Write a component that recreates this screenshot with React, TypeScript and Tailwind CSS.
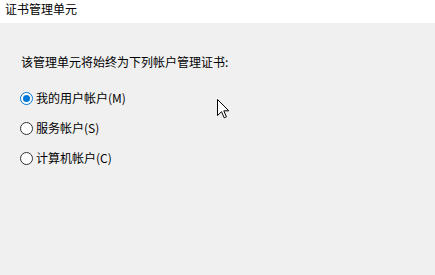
import React from "react";

const font = { fontFamily: '"Noto Sans CJK SC", "Microsoft YaHei", sans-serif' };

function Radio({ checked, label }: { checked?: boolean; label: string }) {
  return (
    <div className="flex h-[30px] items-center">
      <div
        className={
          "flex h-[13px] w-[13px] items-center justify-center rounded-full border bg-white " +
          (checked ? "border-[#0078d7]" : "border-[#333333]")
        }
      >
        {checked && <div className="h-[7px] w-[7px] rounded-full bg-[#0078d7]" />}
      </div>
      <span className="ml-[3px] text-[12px] leading-[16px] text-black">{label}</span>
    </div>
  );
}

export default function App() {
  return (
    <div className="relative h-[275px] w-[435px] overflow-hidden bg-[#f0f0f0]" style={font}>
      <div className="flex h-[23px] items-start bg-white pl-[5px] pt-[1px] text-[12px] leading-[16px] text-black">
        证书管理单元
      </div>
      <div className="flex flex-col pl-[20px] pt-[31px]">
        <div className="pl-[1px] text-[12px] leading-[16px] text-black">该管理单元将始终为下列帐户管理证书:</div>
        <div className="mt-[13px] flex flex-col">
          <Radio checked label="我的用户帐户(M)" />
          <Radio label="服务帐户(S)" />
          <Radio label="计算机帐户(C)" />
        </div>
      </div>
      <svg
        className="absolute left-[217px] top-[99px]"
        width="13"
        height="20"
        viewBox="0 0 13 20"
      >
        <path
          d="M0.5 0.5 L0.5 16.5 L4.5 12.7 L7.2 18.8 L9.4 17.8 L6.8 11.8 L11.8 11.8 Z"
          fill="white"
          stroke="black"
          strokeWidth="1"
          strokeLinejoin="miter"
        />
      </svg>
    </div>
  );
}
